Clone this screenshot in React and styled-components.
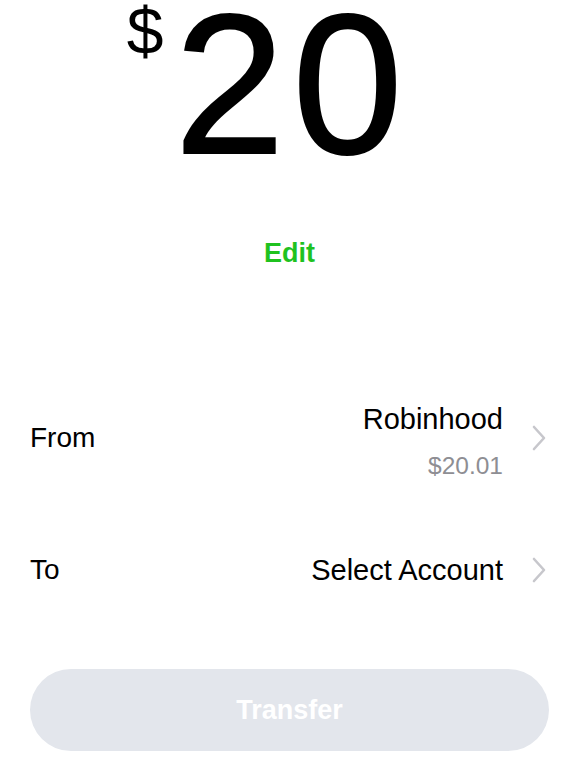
import styled, { createGlobalStyle } from "styled-components"

const GlobalStyle = createGlobalStyle`
    html, body {
        margin: 0;
        padding: 0;
        background: #ffffff;
    }

    body {
        font-family: "Liberation Sans", Arial, sans-serif;
        color: #000;
    }
`

const Screen = styled.div`
    width: 519px;
    padding: 0 38px 0 30px;
    display: flex;
    flex-direction: column;
`

const AmountRow = styled.div`
    display: flex;
    justify-content: center;
    margin-top: 6px;
`

const Amount = styled.div`
    position: relative;
    padding-left: 6px;
    font-family: "Liberation Sans", Arial, sans-serif;
    font-size: 198px;
    line-height: 0.8;
    letter-spacing: 8px;
    -webkit-text-stroke: 2px #000;
`

const Currency = styled.span`
    position: absolute;
    right: 100%;
    top: -8px;
    margin-right: 5px;
    font-size: 66px;
    line-height: 1;
    letter-spacing: 0;
    -webkit-text-stroke: 0;
`

const EditButton = styled.button`
    align-self: center;
    margin-top: 74px;
    padding: 0;
    border: none;
    background: none;
    color: #1fc21f;
    font-family: "Liberation Sans", Arial, sans-serif;
    font-weight: 700;
    font-size: 27px;
    line-height: 30px;
    cursor: pointer;
`

const Rows = styled.div`
    display: flex;
    flex-direction: column;
    gap: 42px;
    margin-top: 125px;
`

const Row = styled.div`
    display: flex;
    align-items: center;
    justify-content: space-between;
    height: 90px;
    padding-right: 2px;
`

const Label = styled.span`
    font-size: 28px;
`

const Side = styled.div`
    display: flex;
    align-items: center;
    gap: 28px;
`

const Account = styled.div`
    display: flex;
    flex-direction: column;
    align-items: flex-end;
    gap: 18px;
    padding-top: 5px;
`

const AccountName = styled.span`
    font-size: 29px;
    line-height: 32px;
`

const Balance = styled.span`
    font-size: 24.5px;
    line-height: 26px;
    color: #8e8e93;
`

const Chevron = () => (
    <svg width="16" height="26" viewBox="0 0 16 26" fill="none">
        <path
            d="M3 2l10 11-10 11"
            stroke="#c7c7cc"
            strokeWidth="2.6"
            strokeLinecap="round"
            strokeLinejoin="round"
        />
    </svg>
)

const TransferButton = styled.button`
    margin-top: 54px;
    height: 82px;
    width: 100%;
    border: none;
    border-radius: 41px;
    background: #e3e6ec;
    color: #ffffff;
    font-family: "Liberation Sans", Arial, sans-serif;
    font-weight: 700;
    font-size: 27px;
`

const App = () => {
    return (
        <>
            <GlobalStyle />
            <Screen>
                <AmountRow>
                    <Amount>
                        <Currency>$</Currency>
                        20
                    </Amount>
                </AmountRow>
                <EditButton>Edit</EditButton>
                <Rows>
                    <Row>
                        <Label>From</Label>
                        <Side>
                            <Account>
                                <AccountName>Robinhood</AccountName>
                                <Balance>$20.01</Balance>
                            </Account>
                            <Chevron />
                        </Side>
                    </Row>
                    <Row>
                        <Label>To</Label>
                        <Side>
                            <AccountName>Select Account</AccountName>
                            <Chevron />
                        </Side>
                    </Row>
                </Rows>
                <TransferButton disabled>Transfer</TransferButton>
            </Screen>
        </>
    )
}

export default App
